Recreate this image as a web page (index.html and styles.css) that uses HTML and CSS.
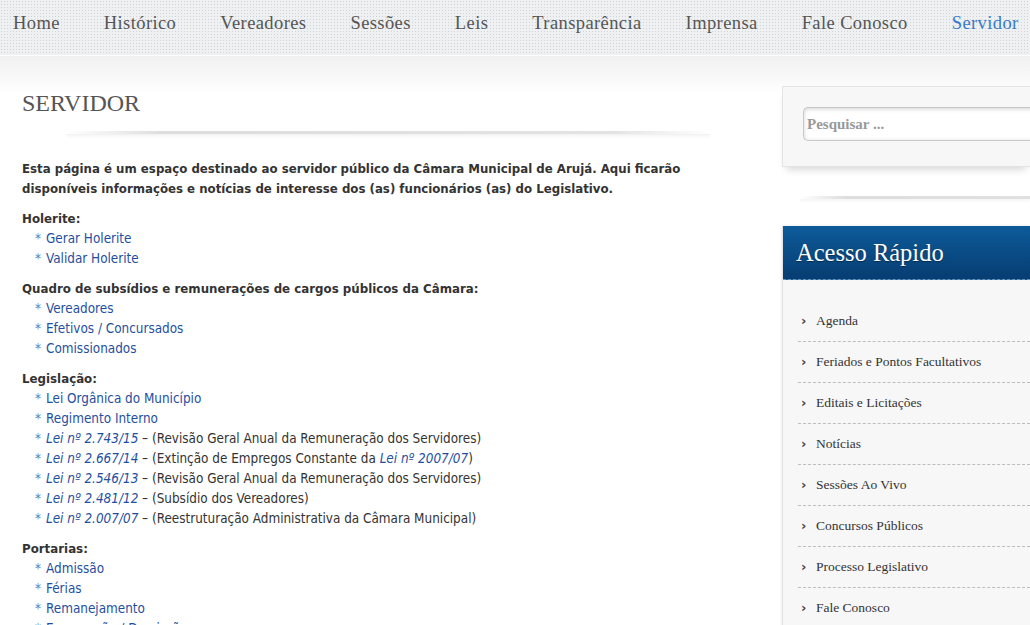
FILE: index.html
```html
<!DOCTYPE html>
<html lang="pt-BR">
<head>
<meta charset="utf-8">
<title>Servidor</title>
<link rel="stylesheet" href="styles.css">
</head>
<body>
<header class="topbar">
  <nav class="menu">
    <a href="#">Home</a>
    <a href="#">Histórico</a>
    <a href="#">Vereadores</a>
    <a href="#">Sessões</a>
    <a href="#">Leis</a>
    <a href="#">Transparência</a>
    <a href="#">Imprensa</a>
    <a href="#">Fale Conosco</a>
    <a href="#" class="active">Servidor</a>
  </nav>
</header>
<div class="page">
  <main class="content">
    <h1 class="title">SERVIDOR</h1>
    <div class="rule"></div>
    <p class="intro">Esta página é um espaço destinado ao servidor público da Câmara Municipal de Arujá. Aqui ficarão disponíveis informações e notícias de interesse dos (as) funcionários (as) do Legislativo.</p>

    <section class="group">
      <h2>Holerite:</h2>
      <ul>
        <li><a href="#">Gerar Holerite</a></li>
        <li><a href="#">Validar Holerite</a></li>
      </ul>
    </section>

    <section class="group">
      <h2>Quadro de subsídios e remunerações de cargos públicos da Câmara:</h2>
      <ul>
        <li><a href="#">Vereadores</a></li>
        <li><a href="#">Efetivos / Concursados</a></li>
        <li><a href="#">Comissionados</a></li>
      </ul>
    </section>

    <section class="group">
      <h2>Legislação:</h2>
      <ul>
        <li><a href="#">Lei Orgânica do Município</a></li>
        <li><a href="#">Regimento Interno</a></li>
        <li><a href="#" class="law">Lei nº 2.743/15</a> – (Revisão Geral Anual da Remuneração dos Servidores)</li>
        <li><a href="#" class="law">Lei nº 2.667/14</a> – (Extinção de Empregos Constante da <a href="#" class="law">Lei nº 2007/07</a>)</li>
        <li><a href="#" class="law">Lei nº 2.546/13</a> – (Revisão Geral Anual da Remuneração dos Servidores)</li>
        <li><a href="#" class="law">Lei nº 2.481/12</a> – (Subsídio dos Vereadores)</li>
        <li><a href="#" class="law">Lei nº 2.007/07</a> – (Reestruturação Administrativa da Câmara Municipal)</li>
      </ul>
    </section>

    <section class="group">
      <h2>Portarias:</h2>
      <ul>
        <li><a href="#">Admissão</a></li>
        <li><a href="#">Férias</a></li>
        <li><a href="#">Remanejamento</a></li>
        <li><a href="#">Exoneração / Demissão</a></li>
      </ul>
    </section>
  </main>

  <aside class="sidebar">
    <div class="widget search-widget">
      <input class="search" type="text" placeholder="Pesquisar ...">
    </div>
    <div class="side-rule"></div>
    <div class="widget quick">
      <h3 class="quick-title">Acesso Rápido</h3>
      <ul class="quick-list">
        <li><a href="#">Agenda</a></li>
        <li><a href="#">Feriados e Pontos Facultativos</a></li>
        <li><a href="#">Editais e Licitações</a></li>
        <li><a href="#">Notícias</a></li>
        <li><a href="#">Sessões Ao Vivo</a></li>
        <li><a href="#">Concursos Públicos</a></li>
        <li><a href="#">Processo Legislativo</a></li>
        <li><a href="#">Fale Conosco</a></li>
      </ul>
    </div>
  </aside>
</div>
</body>
</html>
```
FILE: styles.css
```css
* { box-sizing: border-box; }
html, body { margin: 0; padding: 0; }
body {
  background: #fff;
  overflow: hidden;
  width: 1030px;
  height: 625px;
  font-family: "DejaVu Sans Condensed", "DejaVu Sans", sans-serif;
}
a { text-decoration: none; }

.topbar {
  height: 56px;
  background-color: #eef0f2;
  background-image: radial-gradient(circle, #cfd4d9 0.8px, transparent 1px);
  background-size: 3px 3px;
  border-bottom: 1px solid #fff;
}
.menu {
  display: flex;
  padding-left: 13px;
  gap: 44px;
  white-space: nowrap;
}
.menu a {
  font-family: "Liberation Serif", serif;
  font-size: 18.5px;
  letter-spacing: 0.4px;
  color: #555;
  line-height: 46px;
}
.menu a.active { color: #3a78c8; }

.page {
  display: flex;
  background: linear-gradient(#f0f0f0 0px, #fff 38px);
  min-height: 569px;
}
.content {
  width: 760px;
  padding: 30px 0 0 22px;
}
.title {
  margin: 0;
  font-family: "Liberation Serif", serif;
  font-weight: normal;
  font-size: 24px;
  line-height: 34px;
  color: #555;
}
.rule {
  margin: 11px 50px 0 45px;
  height: 4px;
  background: linear-gradient(90deg, rgba(255,255,255,0), #ddd 15%, #e3e3e3 85%, rgba(255,255,255,0.4));
  box-shadow: 0 2px 3px rgba(0,0,0,0.04);
  border-bottom: 1px solid #f2f2f2;
}
.intro {
  margin: 24px 0 10px;
  font-size: 13.1px;
  line-height: 20px;
  font-weight: bold;
  color: #333;
  width: 690px;
}
.group { margin-bottom: 10px; }
.group h2 {
  margin: 0;
  font-size: 13.15px;
  line-height: 20px;
  font-weight: bold;
  color: #333;
}
.group ul {
  list-style: none;
  margin: 0;
  padding: 0 0 0 13px;
}
.group li {
  font-size: 13.4px;
  line-height: 20px;
  color: #333;
}
.group li::before {
  content: "*";
  color: #5b7fb8;
  display: inline-block;
  width: 11px;
}
.group li a { color: #1f4fa0; }
.group li a.law { font-style: italic; }

.sidebar {
  width: 270px;
  padding-top: 30px;
}
.widget {
  margin-left: 22px;
}
.search-widget {
  height: 81px;
  background: #f7f7f7;
  border: 1px solid #e4e4e4;
  border-right: none;
  box-shadow: 0 6px 8px -4px rgba(0,0,0,0.18);
  padding: 20px 0 0 20px;
}
.search {
  display: block;
  width: 240px;
  height: 34px;
  border: 1px solid #c9c9c9;
  border-right: none;
  border-radius: 5px 0 0 5px;
  background: #fff;
  box-shadow: inset 0 1px 4px rgba(0,0,0,0.18);
  padding: 0 3px;
  font-family: "Liberation Serif", serif;
  font-weight: bold;
  font-size: 15px;
  color: #999;
}
.search::placeholder { color: #999; }
.side-rule {
  margin: 29px 0 0 40px;
  height: 3px;
  background: linear-gradient(90deg, rgba(255,255,255,0), #ddd 20%, #e0e0e0);
  box-shadow: 0 2px 3px rgba(0,0,0,0.05);
}
.quick {
  margin-top: 27px;
  background: #f7f7f7;
  border-left: 1px solid #e2e2e2;
  box-shadow: 0 0 3px rgba(0,0,0,0.12);
}
.quick-title {
  margin: 0;
  height: 54px;
  background: linear-gradient(#0d5b9a, #073d72);
  border-bottom: 1px dashed #6f8fb3;
  font-family: "Liberation Serif", serif;
  font-weight: normal;
  font-size: 24.5px;
  line-height: 54px;
  color: #fff;
  padding-left: 13px;
  text-shadow: 0 1px 1px rgba(0,0,0,0.4);
}
.quick-list {
  list-style: none;
  margin: 0;
  padding: 21px 0 0 15px;
}
.quick-list li {
  height: 41px;
  line-height: 40px;
  border-bottom: 1px dashed #bdbdbd;
  font-family: "Liberation Serif", serif;
  font-size: 13.5px;
  padding-left: 3px;
}
.quick-list li::before {
  content: "›";
  display: inline-block;
  width: 15px;
  font-family: "DejaVu Sans", sans-serif;
  font-weight: bold;
  font-size: 13px;
  color: #444;
}
.quick-list li a { color: #333; }
```
